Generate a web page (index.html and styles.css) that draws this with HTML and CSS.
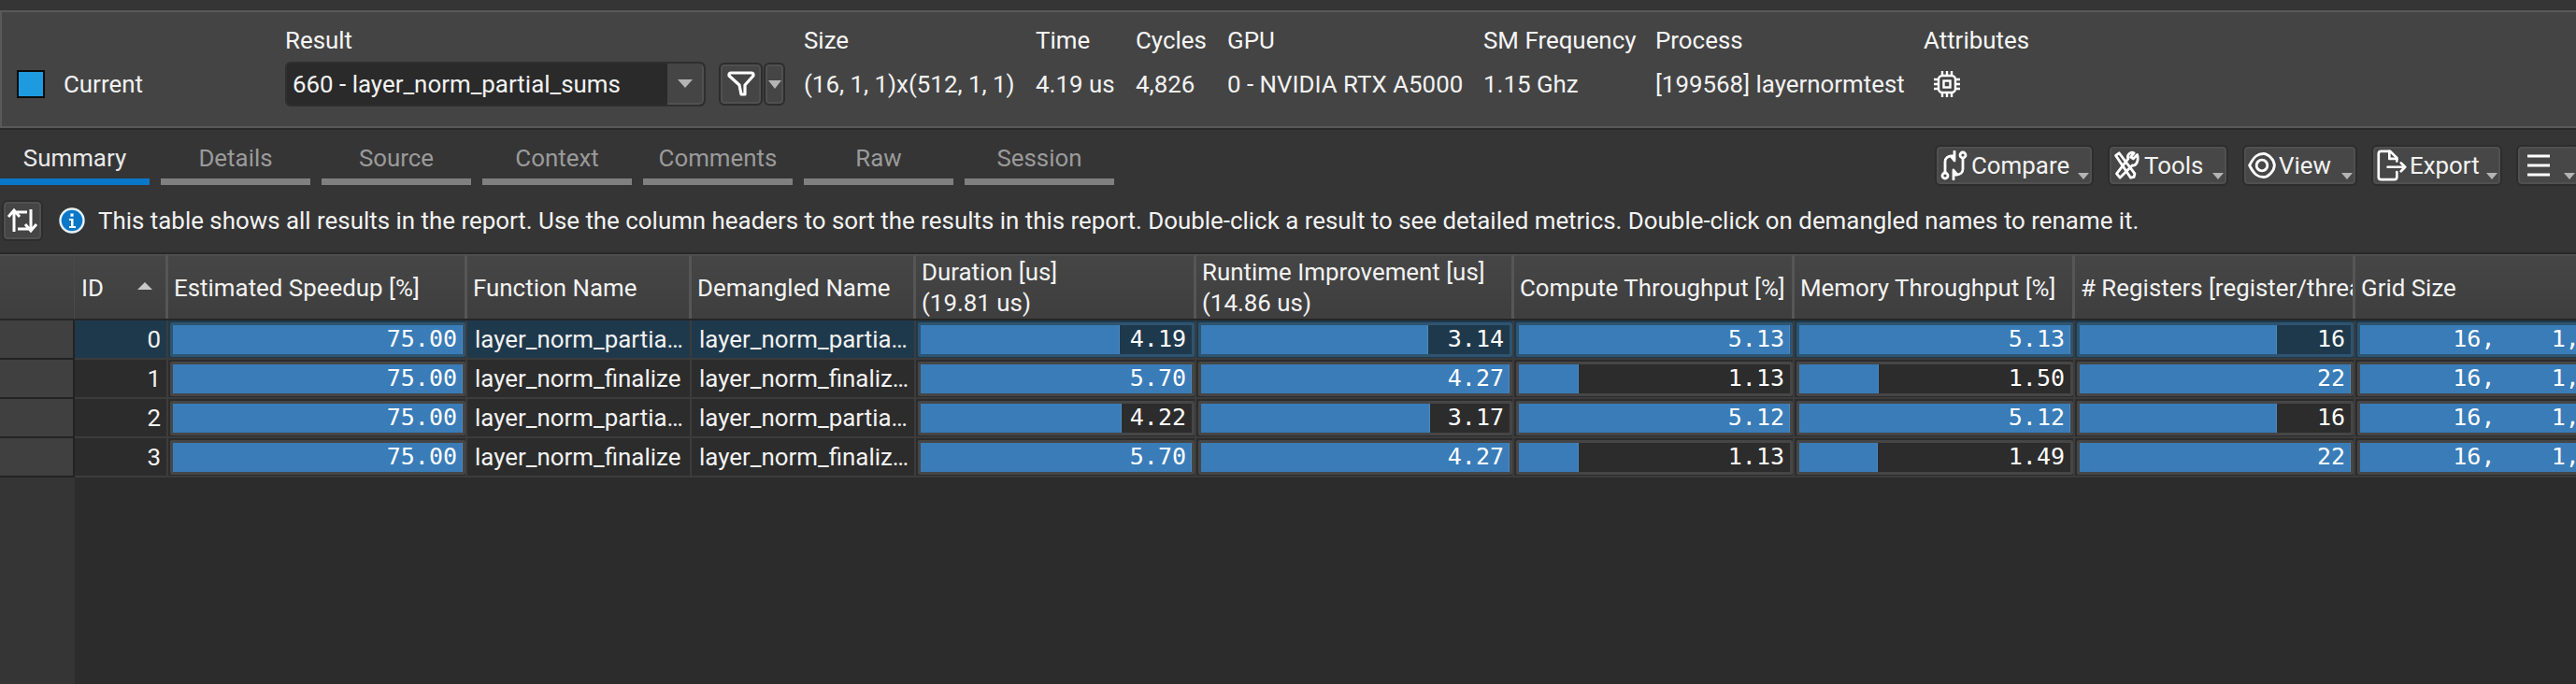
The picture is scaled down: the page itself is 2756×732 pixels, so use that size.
FILE: index.html
```html
<!DOCTYPE html>
<html lang="en">

<head>
    <meta charset="UTF-8">
    <title>Summary</title>
    <link rel="stylesheet" href="styles.css">
</head>

<body>
    <section class="panel">
        <div></div>
        <div class="label">Result</div>
        <div class="label">Size</div>
        <div class="label">Time</div>
        <div class="label">Cycles</div>
        <div class="label">GPU</div>
        <div class="label">SM Frequency</div>
        <div class="label">Process</div>
        <div class="label">Attributes</div>

        <div class="current"><span class="swatch"></span>Current</div>
        <div class="result">
            <div class="combo">
                <span class="combo-text">660 - layer_norm_partial_sums</span>
                <span class="combo-drop"><i class="caret"></i></span>
            </div>
            <button class="filter-btn">
                <svg width="32" height="30" viewBox="0 0 32 30" fill="none" stroke="#fff" stroke-width="3.2" stroke-linejoin="round">
                    <path d="M3 5q0-2 2-2h22q2 0 2 2v1L20 16v10l-4 0-2-10L3 6z" />
                </svg>
            </button>
            <button class="filter-drop"><i class="caret"></i></button>
        </div>
        <div class="value">(16, 1, 1)x(512, 1, 1)</div>
        <div class="value">4.19 us</div>
        <div class="value">4,826</div>
        <div class="value">0 - NVIDIA RTX A5000</div>
        <div class="value">1.15 Ghz</div>
        <div class="value">[199568] layernormtest</div>
        <div class="value attr">
            <svg width="30" height="30" viewBox="0 0 30 30" fill="none" stroke="#fff" stroke-width="2.4">
                <rect x="6" y="6" width="18" height="18" rx="4" />
                <rect x="11.5" y="11.5" width="7" height="7" />
                <path d="M10 1v4M15 1v4M20 1v4M10 25v4M15 25v4M20 25v4M1 10h4M1 15h4M1 20h4M25 10h4M25 15h4M25 20h4" />
            </svg>
        </div>
    </section>

    <div class="tabbar">
        <nav class="tabs">
            <a class="tab active">Summary</a>
            <a class="tab">Details</a>
            <a class="tab">Source</a>
            <a class="tab">Context</a>
            <a class="tab">Comments</a>
            <a class="tab">Raw</a>
            <a class="tab">Session</a>
        </nav>
        <div class="tools">
            <button class="tool w-compare">
                <svg width="30" height="32" viewBox="0 0 30 32" fill="none" stroke="#fff" stroke-width="2.8" stroke-linecap="round" stroke-linejoin="round">
                    <circle cx="24" cy="5" r="3" />
                    <circle cx="5" cy="27" r="3" />
                    <path d="M5 23V12c0-4 3-6 7-6h3M15 1v10l-4-5" />
                    <path d="M24 9v11c0 4-3 6-7 6h-3M14 31V21l4 5" />
                </svg>
                <span class="tool-text">Compare</span><i class="caret tool-caret"></i>
            </button>
            <button class="tool w-tools">
                <svg width="30" height="32" viewBox="0 0 34 36" fill="none" stroke="#fff" stroke-width="3.2" stroke-linejoin="round">
                    <path d="M3 6l4-3 19 25-1 4-4 1z" />
                    <path d="M29 5l-5 5-3-2 4-5c-4-2-9 2-7 7L4 28l4 5 15-15c5 1 8-6 6-13z" />
                </svg>
                <span class="tool-text">Tools</span><i class="caret tool-caret"></i>
            </button>
            <button class="tool w-view">
                <svg width="30" height="32" viewBox="0 0 36 36" fill="none" stroke="#fff" stroke-width="3.4">
                    <path d="M2 18C8 6 13 3 20 3c6 0 14 8 14 15s-8 15-14 15C13 33 8 30 2 18z" />
                    <circle cx="18" cy="18" r="7" />
                </svg>
                <span class="tool-text">View</span><i class="caret tool-caret"></i>
            </button>
            <button class="tool w-export">
                <svg width="32" height="34" viewBox="0 0 36 38" fill="none" stroke="#fff" stroke-width="3" stroke-linecap="round" stroke-linejoin="round">
                    <path d="M24 14V10L16 2H5Q2 2 2 5v28q0 3 3 3h16q3 0 3-3v-6" />
                    <path d="M15 2v9h9M13 21h21M29 16l5 5-5 5" />
                </svg>
                <span class="tool-text">Export</span><i class="caret tool-caret"></i>
            </button>
            <button class="tool w-menu">
                <svg width="28" height="30" viewBox="0 0 28 30" fill="none" stroke="#fff" stroke-width="3">
                    <path d="M2 5h24M2 15h24M2 25h24" />
                </svg>
                <i class="caret tool-caret"></i>
            </button>
        </div>
    </div>

    <div class="banner">
        <button class="swap">
            <svg width="34" height="30" viewBox="0 0 34 30" fill="none" stroke="#fff" stroke-width="3">
                <path d="M8 27V6h14M2 11l6-7 6 7M26 3v21H12M20 19l6 7 6-7" />
            </svg>
        </button>
        <svg class="info" width="28" height="28" viewBox="0 0 28 28">
            <circle cx="14" cy="14" r="12.5" fill="#0a78c8" stroke="#e8f2fa" stroke-width="2.4" />
            <rect x="12.4" y="6.5" width="3.2" height="3.2" fill="#fff" />
            <path d="M11 12h4.5v8H18v2h-7v-2h2v-6h-2z" fill="#fff" />
        </svg>
        <span>This table shows all results in the report. Use the column headers to sort the results in this report. Double-click a result to see detailed metrics. Double-click on demangled names to rename it.</span>
    </div>

    <section class="table">
        <div class="row head">
            <div class="hcell gutter"></div>
            <div class="hcell id-head">ID<i class="sort"></i></div>
            <div class="hcell">Estimated Speedup [%]</div>
            <div class="hcell">Function Name</div>
            <div class="hcell">Demangled Name</div>
            <div class="hcell">Duration [us]<br>(19.81 us)</div>
            <div class="hcell">Runtime Improvement [us]<br>(14.86 us)</div>
            <div class="hcell">Compute Throughput [%]</div>
            <div class="hcell">Memory Throughput [%]</div>
            <div class="hcell"># Registers [register/thread]</div>
            <div class="hcell">Grid Size</div>
        </div>

        <div class="row selected">
            <div class="cell gutter"></div>
            <div class="cell num">0</div>
            <div class="cell"><div class="bar"><div class="fill" style="width:100%"></div><div class="val">75.00</div></div></div>
            <div class="cell"><span class="name">layer_norm_partial_sums</span></div>
            <div class="cell"><span class="name">layer_norm_partial_sums</span></div>
            <div class="cell"><div class="bar"><div class="fill" style="width:73.5%"></div><div class="val">4.19</div></div></div>
            <div class="cell"><div class="bar"><div class="fill" style="width:73.5%"></div><div class="val">3.14</div></div></div>
            <div class="cell"><div class="bar"><div class="fill" style="width:100%"></div><div class="val">5.13</div></div></div>
            <div class="cell"><div class="bar"><div class="fill" style="width:100%"></div><div class="val">5.13</div></div></div>
            <div class="cell"><div class="bar"><div class="fill" style="width:72.7%"></div><div class="val">16</div></div></div>
            <div class="cell"><div class="bar"><div class="fill" style="width:100%"></div><div class="val">16,    1,    1</div></div></div>
        </div>

        <div class="row">
            <div class="cell gutter"></div>
            <div class="cell num">1</div>
            <div class="cell"><div class="bar"><div class="fill" style="width:100%"></div><div class="val">75.00</div></div></div>
            <div class="cell"><span class="name">layer_norm_finalize</span></div>
            <div class="cell"><span class="name">layer_norm_finalize_sums</span></div>
            <div class="cell"><div class="bar"><div class="fill" style="width:100%"></div><div class="val">5.70</div></div></div>
            <div class="cell"><div class="bar"><div class="fill" style="width:100%"></div><div class="val">4.27</div></div></div>
            <div class="cell"><div class="bar"><div class="fill" style="width:22%"></div><div class="val">1.13</div></div></div>
            <div class="cell"><div class="bar"><div class="fill" style="width:29.2%"></div><div class="val">1.50</div></div></div>
            <div class="cell"><div class="bar"><div class="fill" style="width:100%"></div><div class="val">22</div></div></div>
            <div class="cell"><div class="bar"><div class="fill" style="width:100%"></div><div class="val">16,    1,    1</div></div></div>
        </div>

        <div class="row">
            <div class="cell gutter"></div>
            <div class="cell num">2</div>
            <div class="cell"><div class="bar"><div class="fill" style="width:100%"></div><div class="val">75.00</div></div></div>
            <div class="cell"><span class="name">layer_norm_partial_sums</span></div>
            <div class="cell"><span class="name">layer_norm_partial_sums</span></div>
            <div class="cell"><div class="bar"><div class="fill" style="width:74%"></div><div class="val">4.22</div></div></div>
            <div class="cell"><div class="bar"><div class="fill" style="width:74.2%"></div><div class="val">3.17</div></div></div>
            <div class="cell"><div class="bar"><div class="fill" style="width:100%"></div><div class="val">5.12</div></div></div>
            <div class="cell"><div class="bar"><div class="fill" style="width:100%"></div><div class="val">5.12</div></div></div>
            <div class="cell"><div class="bar"><div class="fill" style="width:72.7%"></div><div class="val">16</div></div></div>
            <div class="cell"><div class="bar"><div class="fill" style="width:100%"></div><div class="val">16,    1,    1</div></div></div>
        </div>

        <div class="row">
            <div class="cell gutter"></div>
            <div class="cell num">3</div>
            <div class="cell"><div class="bar"><div class="fill" style="width:100%"></div><div class="val">75.00</div></div></div>
            <div class="cell"><span class="name">layer_norm_finalize</span></div>
            <div class="cell"><span class="name">layer_norm_finalize_sums</span></div>
            <div class="cell"><div class="bar"><div class="fill" style="width:100%"></div><div class="val">5.70</div></div></div>
            <div class="cell"><div class="bar"><div class="fill" style="width:100%"></div><div class="val">4.27</div></div></div>
            <div class="cell"><div class="bar"><div class="fill" style="width:22%"></div><div class="val">1.13</div></div></div>
            <div class="cell"><div class="bar"><div class="fill" style="width:29%"></div><div class="val">1.49</div></div></div>
            <div class="cell"><div class="bar"><div class="fill" style="width:100%"></div><div class="val">22</div></div></div>
            <div class="cell"><div class="bar"><div class="fill" style="width:100%"></div><div class="val">16,    1,    1</div></div></div>
        </div>

        <div class="rest">
            <div class="rest-gutter"></div>
        </div>
    </section>
</body>

</html>
```
FILE: styles.css
```css
* {
    box-sizing: border-box;
}

html,
body {
    margin: 0;
    height: 732px;
    overflow: hidden;
}

body {
    font-family: Roboto, "Liberation Sans", sans-serif;
    font-size: 25.9px;
    background: #353535;
    color: #f2f2f2;
    display: flex;
    flex-direction: column;
    padding-top: 11px;
}

button {
    font: inherit;
    color: inherit;
    padding: 0;
}

/* Report header */
.panel {
    height: 126px;
    flex: none;
    background: #444;
    border: 2px solid #595959;
    border-right: none;
    box-shadow: 0 2px 0 #292929;
    display: grid;
    grid-template-columns: 303px 555px 248px 107px 98px 274px 184px 287px 1fr;
    grid-template-rows: 46px 48px;
    padding-top: 7px;
}

.label {
    display: flex;
    align-items: center;
    color: #f6f6f6;
}

.value {
    display: flex;
    align-items: center;
    white-space: nowrap;
}

.attr {
    padding-left: 10px;
}

.current {
    display: flex;
    align-items: center;
    padding-left: 16px;
    gap: 20px;
}

.swatch {
    width: 30px;
    height: 30px;
    background: #1e9be0;
    border: 2px solid #0b0b0b;
}

.result {
    display: flex;
    align-items: center;
}

.combo {
    width: 450px;
    height: 48px;
    display: flex;
    background: #2a2a2a;
    border: 2px solid #2f2f2f;
    border-radius: 6px;
    overflow: hidden;
}

.combo-text {
    flex: 1;
    display: flex;
    align-items: center;
    padding-left: 6px;
}

.combo-drop {
    width: 39px;
    display: flex;
    align-items: center;
    justify-content: center;
    background: #454545;
    border: 2px solid #505050;
    border-width: 0 2px 2px 0;
    border-radius: 0 5px 5px 0;
}

.caret {
    display: block;
    width: 0;
    height: 0;
    border-left: 8px solid transparent;
    border-right: 8px solid transparent;
    border-top: 9px solid #b4b4b4;
}

.filter-btn,
.filter-drop,
.tool,
.swap {
    background: #454545;
    border: 2px solid #2d2d2d;
    border-radius: 6px;
    box-shadow: inset 0 0 0 2px #505050;
}

.filter-btn {
    width: 47px;
    height: 46px;
    margin-left: 14px;
    display: flex;
    align-items: center;
    justify-content: center;
}

.filter-drop {
    width: 23px;
    height: 46px;
    margin-left: 1px;
    display: flex;
    align-items: center;
    justify-content: center;
}

.filter-drop .caret {
    border-left-width: 7px;
    border-right-width: 7px;
}

/* Tabs and toolbar */
.tabbar {
    flex: none;
    height: 60px;
    margin-top: 2px;
    display: flex;
    justify-content: space-between;
}

.tabs {
    display: flex;
    gap: 12px;
    height: 59px;
}

.tab {
    width: 160px;
    display: flex;
    align-items: center;
    justify-content: center;
    padding-top: 8px;
    color: #9a9a9a;
    border-bottom: 7px solid #808080;
}

.tab.active {
    color: #e8e8e8;
    border-bottom-color: #0a78c8;
}

.tools {
    display: flex;
    gap: 15px;
    align-items: flex-start;
    padding-top: 16px;
    margin-right: -4px;
}

.tool {
    height: 44px;
    display: flex;
    align-items: center;
    gap: 3px;
    padding: 0 3px 0 4px;
    background: #474747;
}

.tool svg {
    flex: none;
}

.tool-text {
    flex: 1;
    text-align: left;
}

.tool-caret {
    align-self: flex-end;
    margin-bottom: 5px;
    border-left-width: 6px;
    border-right-width: 6px;
    border-top-width: 7px;
}

.w-compare {
    width: 170px;
}

.w-tools {
    width: 129px;
}

.w-view {
    width: 123px;
}

.w-export {
    width: 140px;
}

.w-menu {
    width: 68px;
}

.w-menu svg {
    margin-right: auto;
    margin-left: 4px;
}

/* Info line */
.banner {
    flex: none;
    height: 72px;
    display: flex;
    align-items: center;
    padding-left: 2px;
    padding-top: 3px;
    white-space: nowrap;
    margin-top: -1px;
}

.swap {
    width: 44px;
    height: 44px;
    display: flex;
    align-items: center;
    justify-content: center;
    margin-right: 17px;
}

.info {
    margin-right: 14px;
}

/* Results table */
.table {
    flex: 1;
    display: flex;
    flex-direction: column;
    background: #2c2c2c;
    overflow: hidden;
    border-top: 2px solid #292929;
}

.row {
    display: grid;
    grid-template-columns: 80px 100px 320px 240px 240px 300px 340px 300px 300px 300px 326px;
    width: 2846px;
    height: 42px;
    flex: none;
    border-bottom: 2px solid #3c3c3c;
}

.row.head {
    height: 71px;
    border-bottom: 2px solid #262626;
    background: linear-gradient(#464646, #3e3e3e);
}

.hcell {
    display: flex;
    flex-direction: column;
    justify-content: center;
    padding: 1px 0 0 6px;
    border-right: 3px solid #565656;
    border-top: 2px solid #4e4e4e;
    white-space: nowrap;
    overflow: hidden;
    line-height: 33px;
}

.hcell.gutter {
    border-right-width: 1px;
    border-right-color: #4a4a4a;
}

.id-head {
    flex-direction: row;
    align-items: center;
    justify-content: space-between;
    padding: 2px 14px 0 7px;
}

.sort {
    width: 0;
    height: 0;
    margin-bottom: 6px;
    border-left: 8px solid transparent;
    border-right: 8px solid transparent;
    border-bottom: 8px solid #c8c8c8;
}

.cell {
    min-width: 0;
    display: flex;
    align-items: center;
    border-right: 2px solid #3c3c3c;
    padding-left: 2px;
}

.selected {
    background: #1f394c;
}

.cell.gutter {
    background: #404040;
    border-right: 2px solid #232323;
    border-bottom: 2px solid #232323;
    margin-bottom: -2px;
}

.num {
    justify-content: flex-end;
    padding-right: 6px;
}

.name {
    display: block;
    width: 100%;
    padding: 0 4px 0 6px;
    overflow: hidden;
    white-space: nowrap;
    text-overflow: ellipsis;
}

.bar {
    width: 100%;
    height: 37px;
    display: grid;
    border: 3px solid #464646;
    border-radius: 2px;
    overflow: hidden;
}

.selected .bar {
    border-color: #2e5470;
}

.fill,
.val {
    grid-area: 1 / 1;
}

.fill {
    background: #397cb8;
    border-right: 1px solid #5089bd;
}

.val {
    text-align: right;
    padding-right: 6px;
    font-family: "DejaVu Sans Mono", monospace;
    font-size: 25px;
    line-height: 30px;
    white-space: pre;
    color: #fff;
}

.rest {
    flex: 1;
    display: flex;
}

.rest-gutter {
    width: 80px;
    background: #353535;
}
```
